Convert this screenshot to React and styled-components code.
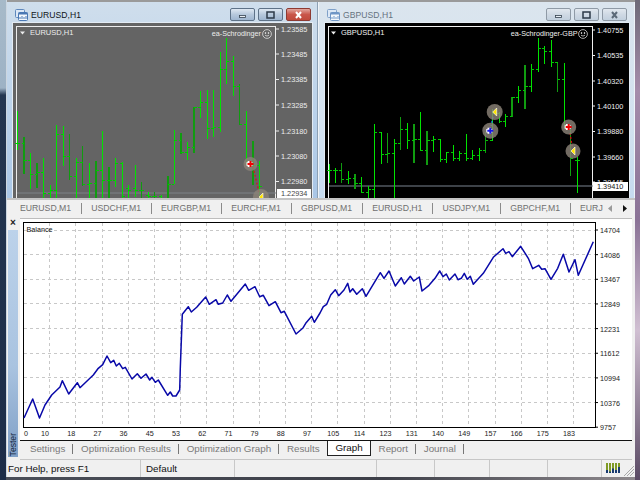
import React from 'react';
import styled, { createGlobalStyle } from 'styled-components';

const GlobalStyle = createGlobalStyle`
  html, body { margin: 0; padding: 0; background: #3a3f4a; }
  body { font-family: "Liberation Sans", Arial, sans-serif; }
`;

const Desktop = styled.div`
  width: 640px;
  height: 480px;
  box-sizing: border-box;
  padding: 0 5px 3px 7px;
  overflow: hidden;
  background:
    linear-gradient(180deg, #a7bac9 0, #9db2c5 88px, #243650 95px, #1d2d48 100%) left / 6px 100% no-repeat,
    linear-gradient(180deg, #6e6a78 0, #a58cab 90px, #8a7296 220px, #d0bfd2 330px, #5a4a64 480px) right / 5px 100% no-repeat,
    linear-gradient(90deg, #4a4e58, #3d3f48 60%, #8f8a8e) bottom / 100% 3px no-repeat,
    #ccd6e0;
`;

const AppWindow = styled.div`
  height: 100%;
  display: flex;
  flex-direction: column;
  background: #f0f0f0;
`;

const MdiArea = styled.div`
  height: 198px;
  flex: none;
  box-sizing: border-box;
  padding-top: 2px;
  display: grid;
  grid-template-columns: 310px 315px;
  column-gap: 2px;
  background: linear-gradient(180deg, #9a9a9a 0, #9a9a9a 2px, #eef3f8 2px);
`;

const ChartWindow = styled.div`
  display: flex;
  flex-direction: column;
  padding: 0 5px 0 6px;
  box-shadow: 1px 0 0 ${p => p.$active ? '#8ca0b4' : 'transparent'};
  background: ${p => p.$active
    ? 'linear-gradient(180deg, #cfdeec, #b9d1ea 60%, #a9c6e6)'
    : 'linear-gradient(180deg, #dbe5ee, #d3e2f0 60%, #c6dbf0)'};
`;

const TitleBar = styled.div`
  height: 21px;
  flex: none;
  box-sizing: border-box;
  padding: 4px 0 0 2px;
  display: flex;
  align-items: center;
  gap: 3px;
`;

const Title = styled.span`
  font-size: 8.6px;
  color: ${p => p.$active ? '#101418' : '#66737f'};
  letter-spacing: 0.05px;
  margin-right: auto;
`;

const WindowButtons = styled.div`
  display: flex;
  gap: 3px;
  padding-right: ${p => p.$right}px;
`;

const CaptionButton = styled.div`
  width: 25px;
  height: 13px;
  border-radius: 2px;
  border: 1px solid ${p => p.$close ? '#8e3a32' : p.$active ? '#5e7288' : '#8f9aa6'};
  box-sizing: border-box;
  display: flex;
  align-items: center;
  justify-content: center;
  background: ${p => p.$close
    ? 'linear-gradient(180deg, #e2a79f, #c9564a 50%, #c04a3c)'
    : p.$active
      ? 'linear-gradient(180deg, #dfe8f2, #b6c8dc 50%, #9fb6d0)'
      : 'linear-gradient(180deg, #e2e8ef, #cfd9e4 50%, #c2d0de)'};
`;

const ChartPane = styled.div`
  flex: 1;
  min-height: 0;
  background: ${p => p.$bg};
  box-shadow: 0 0 0 1px #e3ebf3;
  overflow: hidden;
  svg { display: block; }
  text { font-family: "Liberation Sans", Arial, sans-serif; }
`;

const TabStrip = styled.div`
  height: 18px;
  flex: none;
  box-sizing: border-box;
  display: flex;
  align-items: center;
  padding-left: 13px;
  border-top: 2px solid #c4c4c4;
  background: #f0f0f0;
  overflow: hidden;
`;

const TabList = styled.div`
  flex: 1;
  display: flex;
  overflow: hidden;
  white-space: nowrap;
`;

const ChartTab = styled.span`
  font-size: 8.7px;
  line-height: 11px;
  color: #6f6f6f;
  padding-right: 9.7px;
  margin-right: 9.4px;
  border-right: 1px solid ${p => p.$last ? 'transparent' : '#8a8a8a'};
`;

const ScrollArrows = styled.div`
  width: 30px;
  flex: none;
  box-sizing: border-box;
  display: flex;
  align-items: center;
  gap: 11px;
  padding-left: 3px;
  svg { display: block; }
`;

const TesterPanel = styled.div`
  height: 244px;
  flex: none;
  display: flex;
`;

const Rail = styled.div`
  width: 13px;
  flex: none;
  box-sizing: border-box;
  padding: 3px 2px 3px 1px;
  display: flex;
  flex-direction: column;
`;

const RailClose = styled.div`
  height: 11px;
  font-size: 10px;
  font-weight: bold;
  line-height: 8px;
  text-align: center;
  color: #222;
`;

const RailGrip = styled.div`
  flex: 1;
  display: flex;
  align-items: flex-end;
  justify-content: center;
  background: linear-gradient(180deg, #bcd2ea 0, #a9c3e0 60%, #7f9fc6 100%);
`;

const RailLabel = styled.span`
  writing-mode: vertical-rl;
  transform: rotate(180deg);
  font-size: 8.6px;
  color: #14263e;
  padding-top: 1px;
`;

const TesterBody = styled.div`
  flex: 1;
  min-width: 0;
  display: flex;
  flex-direction: column;
  padding-right: 3px;
`;

const GraphArea = styled.div`
  height: 222px;
  margin-top: 2px;
  flex: none;
  box-sizing: border-box;
  border-top: 1px solid #bdbdbd;
  background: #fff;
  overflow: hidden;
  svg { display: block; }
  text { font-family: "Liberation Sans", Arial, sans-serif; }
`;

const TesterTabs = styled.div`
  height: 20px;
  flex: none;
  box-sizing: border-box;
  display: flex;
  align-items: flex-start;
  border-top: 1px solid #111;
  border-bottom: 1px solid #c6c6c6;
  padding-left: 2px;
`;

const TesterTab = styled.div`
  height: 15px;
  box-sizing: border-box;
  font-size: 9.8px;
  line-height: 15px;
  color: ${p => p.$active ? '#111' : '#7a7a7a'};
  background: ${p => p.$active ? '#fff' : 'transparent'};
  padding: 0 ${p => p.$active ? 7 : 7.9}px;
  position: relative;
  ${p => p.$active && 'border: 1px solid #222; border-top: 0; line-height: 14px;'}
  ${p => p.$sep && `&::after {
    content: "";
    position: absolute;
    right: 0;
    top: 3px;
    height: 10px;
    border-right: 1px solid #777;
  }`}
`;

const StatusBar = styled.div`
  flex: 1;
  display: grid;
  grid-template-columns: 134px 94px 142px 58px 55px 58px 54px 1fr;
  background: #f0f0f0;
`;

const StatusCell = styled.div`
  box-sizing: border-box;
  font-size: 9.8px;
  line-height: 17px;
  color: #111;
  white-space: nowrap;
  padding-left: ${p => p.$pad || 0}px;
  border-right: 1px solid #c8c8c8;
`;

const StatusEnd = styled.div`
  display: flex;
  align-items: center;
  padding-left: 4px;
  svg { display: block; }
`;

const thin = '#00e400';
const wide = '#109c10';

// [x, high, low, open, close, thick] all in 3x zoom coords of the window
const eurBars = [
  [52, 333, 450, 430, 430], [72, 412, 522, 430, 480, 1], [91, 459, 568, 480, 522], [111, 490, 563, 522, 518, 1],
  [130, 474, 600, 518, 580], [150, 556, 600, 580, 572], [170, 376, 600, 572, 403], [190, 378, 497, 403, 470],
  [209, 402, 540, 470, 530, 1], [229, 475, 600, 530, 487], [248, 438, 558, 487, 553, 1], [268, 489, 600, 553, 550],
  [288, 484, 600, 550, 510, 1], [307, 393, 600, 510, 540], [327, 502, 600, 540, 540, 1], [346, 475, 560, 540, 490],
  [366, 486, 600, 490, 590], [385, 556, 600, 565, 572], [405, 495, 590, 565, 572], [425, 546, 600, 572, 570, 1],
  [444, 575, 600, 585, 590], [464, 576, 600, 590, 590, 1], [484, 585, 600, 590, 595], [504, 527, 600, 595, 552, 1],
  [523, 390, 552, 552, 420], [543, 400, 462, 420, 458, 1], [563, 427, 480, 458, 442], [582, 322, 458, 442, 322, 1],
  [602, 272, 354, 322, 306], [621, 270, 418, 306, 385], [641, 270, 412, 385, 381], [661, 156, 396, 381, 208],
  [680, 115, 253, 208, 185], [700, 168, 288, 185, 260], [719, 252, 374, 260, 373, 1], [739, 332, 495, 373, 490],
  [759, 424, 555, 490, 495, 1], [778, 482, 600, 495, 560],
];

const gbpBars = [
  [27, 492, 548, 510, 510], [46, 505, 548, 510, 510], [65, 490, 548, 510, 537, 1], [85, 512, 552, 537, 535],
  [105, 522, 566, 535, 550, 1], [124, 530, 580, 550, 577], [144, 558, 600, 577, 567], [163, 373, 600, 567, 398],
  [184, 397, 493, 398, 462], [203, 400, 488, 462, 460, 1], [223, 418, 600, 460, 430], [242, 352, 450, 430, 387, 1],
  [262, 370, 446, 387, 420], [282, 373, 490, 420, 418, 1], [301, 337, 452, 418, 450], [321, 392, 494, 450, 420, 1],
  [340, 408, 455, 420, 418], [360, 417, 486, 418, 478], [380, 455, 490, 478, 458], [400, 436, 484, 458, 476],
  [419, 452, 484, 476, 460], [438, 402, 482, 460, 475], [458, 450, 480, 475, 465], [478, 445, 482, 465, 450],
  [497, 395, 460, 450, 420, 1], [517, 328, 424, 420, 340], [537, 335, 370, 340, 365], [556, 343, 380, 365, 350],
  [576, 291, 352, 350, 293, 1], [595, 258, 308, 293, 270], [615, 195, 327, 270, 258, 1], [634, 193, 275, 258, 208],
  [655, 113, 215, 208, 145], [674, 138, 192, 145, 155], [693, 120, 200, 155, 188], [713, 188, 275, 188, 238, 1],
  [733, 188, 385, 238, 380], [752, 382, 527, 380, 475, 1], [772, 472, 580, 482, 480],
];

const eurPrices = [['1.23585', 29], ['1.23485', 54], ['1.23385', 79.5], ['1.23285', 105], ['1.23180', 131], ['1.23080', 156], ['1.22980', 181.5]];
const gbpPrices = [['1.40755', 30], ['1.40535', 55.5], ['1.40320', 81], ['1.40100', 106], ['1.39880', 131.5], ['1.39660', 157], ['1.39445', 182]];

const balance = [
  [24, 418], [32.7, 399], [39.5, 418], [45, 405], [51.7, 395], [60, 387], [62.3, 380.7], [68.7, 394], [77.3, 382.7], [80, 387.7],
  [93.3, 375], [98.3, 368.3], [102.7, 364.7], [107, 356], [110.7, 362.7], [113.7, 360.3], [116.3, 366], [119.3, 363.3],
  [122.7, 368.7], [125.3, 367.3], [132, 379], [137.3, 373.7], [141, 378.3], [146, 374], [149.7, 380], [152, 377.3],
  [155.3, 382.3], [158.3, 380], [167.7, 395.3], [170.3, 392], [172.7, 396], [176, 396], [179.7, 390], [180.3, 368],
  [182.3, 314.3], [188.3, 306.7], [191.3, 312], [196.7, 307.3], [205.7, 297], [209.3, 304.3], [216, 299.7], [218.3, 304.3],
  [222.7, 303], [227.3, 295], [231, 301.3], [245.3, 284], [248.7, 290.3], [255, 286.7], [259.7, 296.7], [263.3, 295.3],
  [269, 305.7], [275.3, 301.7], [281, 312.7], [284.3, 311.3], [296, 334], [302.7, 328.3], [305.7, 323.3], [311.7, 316.3],
  [314.3, 322.3], [320, 313], [323.3, 306.7], [326.7, 304.3], [330.7, 295], [335.3, 289.7], [338.7, 295.7], [344, 290],
  [347.7, 283.3], [350, 292], [352.7, 288.7], [356.7, 294.3], [362.3, 288.7], [366, 296.3], [380.3, 272.7], [384, 278.3],
  [389, 271], [395.3, 286], [401.3, 277.7], [404.3, 284], [410.3, 276.3], [413.7, 281], [419.3, 277], [422, 291],
  [429, 285.3], [435, 278.3], [439.7, 271], [443, 276.7], [446.3, 274], [449.3, 280], [455, 274], [458, 279.7],
  [461.3, 278.3], [464.3, 273.3], [467.3, 279.3], [470.3, 276.3], [473.3, 284.3], [483.3, 273.3], [493.3, 257.3], [503, 248.7],
  [505.7, 253.3], [509, 251.7], [512.3, 256.7], [520.7, 246.3], [528.3, 258.3], [532.7, 268.7], [538.7, 265.3], [541.7, 269.3],
  [545, 268.7], [551, 279.3], [557.7, 268.3], [563.3, 254.3], [569, 272], [575, 259.7], [578.3, 275.3], [593.3, 241.7],
];

const yLabels = ['14704', '14086', '13467', '12849', '12231', '11612', '10994', '10376', '9757'];
const xLabels = ['0', '10', '18', '27', '36', '45', '53', '62', '71', '79', '88', '97', '105', '114', '123', '131', '140', '149', '157', '166', '175', '183'];

const WindowIcon = ({ dim }) => (
  <svg width="13" height="12" viewBox="0 0 13 12" style={{ flex: 'none' }}>
    <rect x="0.5" y="0.5" width="9" height="8" rx="1" fill="#dce8f6" stroke={dim ? '#7fa0c8' : '#5f88bc'} />
    <rect x="3.5" y="3.5" width="9" height="8" rx="1" fill="#f4f8fc" stroke={dim ? '#6f96c6' : '#4a78b4'} />
    <rect x="3.5" y="3.5" width="9" height="2" fill={dim ? '#6f96c6' : '#4a78b4'} />
    <path d="M5 10V8M7 10V7M9 10V8M11 10V7" stroke={dim ? '#6f96c6' : '#4a78b4'} />
  </svg>
);

const Caption = ({ kind, active }) => (
  <CaptionButton $close={kind === 'close' && active} $active={active}>
    <svg width="11" height="8" viewBox="0 0 11 8">
      {kind === 'min' && <rect x="2.5" y="4.5" width="6" height="2" fill="#e8eef4" stroke="#33414f" strokeWidth="0.8" />}
      {kind === 'max' && <rect x="2" y="1" width="7" height="6" fill="none" stroke="#2c3a48" strokeWidth="1.5" />}
      {kind === 'close' && <path d="M3 1l5 6M8 1L3 7" stroke={active ? '#fff' : '#5c6a78'} strokeWidth="2" />}
    </svg>
  </CaptionButton>
);

const Marker = ({ x, y, r = 7.5, kind }) => {
  const arrow = `M${x - 3} ${y}h6M${x} ${y - 3}v6`;
  const color = kind === 'red' ? '#f00000' : '#1414e8';
  return (
    <g>
      <circle cx={x} cy={y} r={r} fill="#8b8378" fillOpacity="0.82" />
      {kind === 'sell' && <path d={`M${x + 2} ${y - 4}v8l-4 -4z`} fill="#ffe600" stroke="#fff" strokeWidth="0.6" />}
      {kind !== 'sell' && <path d={arrow} stroke="#fff" strokeWidth="3.6" transform="translate(-1 0)" />}
      {kind !== 'sell' && <path d={arrow} stroke={color} strokeWidth="2" />}
    </g>
  );
};

const ChartBars = ({ bars, base }) => (
  <g shapeRendering="crispEdges">
    {bars.map(([x, hi, lo, open, close, thick]) => {
      const px = base + x / 3;
      const color = thick ? wide : thin;
      return (
        <g key={x} stroke={color}>
          <line x1={px} x2={px} y1={hi / 3} y2={lo / 3} strokeWidth={thick ? 1.6 : 1} />
          <line x1={px - 2.5} x2={px} y1={open / 3} y2={open / 3} stroke="#00c800" />
          <line x1={px} x2={px + 2.5} y1={close / 3} y2={close / 3} stroke="#00c800" />
        </g>
      );
    })}
  </g>
);

const PriceAxis = ({ prices, frameX, labelX, color }) => (
  <g>
    {prices.map(([label, y]) => (
      <g key={label}>
        <line x1={frameX} x2={frameX + 3} y1={y} y2={y} stroke={color} />
        <text x={labelX} y={y + 2.6} fontSize="7.3" fill={color}>{label}</text>
      </g>
    ))}
  </g>
);

const Smiley = ({ x, y, color }) => (
  <g fill="none" stroke={color} strokeWidth="0.7">
    <circle cx={x} cy={y} r="4.4" />
    <circle cx={x - 1.5} cy={y - 1} r="0.5" fill={color} />
    <circle cx={x + 1.5} cy={y - 1} r="0.5" fill={color} />
    <path d={`M${x - 2} ${y + 1.2}q2 1.8 4 0`} />
  </g>
);

const ChartLabels = ({ symbol, expert, triX, symX, expertEnd, smileX, color }) => (
  <g>
    <path d={`M${triX} 31.5h5l-2.5 3z`} fill={color} />
    <text x={symX} y={35.3} fontSize="7.5" fill={color}>{symbol}</text>
    <text x={expertEnd} y={36.4} fontSize="7.2" fill={color} textAnchor="end">{expert}</text>
    <Smiley x={smileX} y={34} color={color} />
  </g>
);

const App = () => {
  const gridX = Array.from({ length: 22 }, (_, i) => 23.5 + 26.2 * i);
  const gridY = Array.from({ length: 8 }, (_, i) => 230 + 24.65 * i);
  const chartTabs = ['EURUSD,M1', 'USDCHF,M1', 'EURGBP,M1', 'EURCHF,M1', 'GBPUSD,M1', 'EURUSD,H1', 'USDJPY,M1', 'GBPCHF,M1'];
  const barTops = [2, 1, 3, 2, 4];
  return (
    <Desktop>
      <GlobalStyle />
      <AppWindow>
        <MdiArea>
          <ChartWindow $active>
            <TitleBar>
              <WindowIcon />
              <Title $active>EURUSD,H1</Title>
              <WindowButtons $right={1}>
                <Caption kind="min" active />
                <Caption kind="max" active />
                <Caption kind="close" active />
              </WindowButtons>
            </TitleBar>
            <ChartPane $bg="#646464">
              <svg width="299" height="175" viewBox="13 23 299 175">
                <rect x="16.5" y="26.5" width="259" height="180" fill="none" stroke="#ececec" />
                <line x1="17" x2="276" y1="193" y2="193" stroke="#7c8186" />
                <ChartBars bars={eurBars} base={0} />
                <path d="M253 167L259 192" stroke="#e01010" strokeWidth="1.2" strokeDasharray="2 2" />
                <Marker x={250.5} y={164} r={7} kind="red" />
                <Marker x={261} y={197} r={8} kind="sell" />
                <PriceAxis prices={eurPrices} frameX={276} labelX={281} color="#ececec" />
                <rect x="277" y="189" width="34" height="9" fill="#fff" />
                <text x="281" y="196" fontSize="7.3" fill="#444">1.22934</text>
                <ChartLabels symbol="EURUSD,H1" expert="ea-Schrodinger" triX={20} symX={30} expertEnd={261} smileX={267} color="#ececec" />
              </svg>
            </ChartPane>
          </ChartWindow>
          <ChartWindow>
            <TitleBar>
              <WindowIcon dim />
              <Title>GBPUSD,H1</Title>
              <WindowButtons $right={2}>
                <Caption kind="min" />
                <Caption kind="max" />
                <Caption kind="close" />
              </WindowButtons>
            </TitleBar>
            <ChartPane $bg="#000">
              <svg width="304" height="175" viewBox="325 23 304 175">
                <rect x="328.5" y="26.5" width="264" height="180" fill="none" stroke="#f0f0f0" />
                <line x1="329" x2="593" y1="186" y2="186" stroke="#7a8490" />
                <ChartBars bars={gbpBars} base={320} />
                <path d="M493 117L491 126" stroke="#1e8cff" strokeWidth="1.2" strokeDasharray="2 2" />
                <path d="M570 133L572 146" stroke="#d01010" strokeWidth="1.4" strokeDasharray="2 2" />
                <Marker x={494.7} y={112} r={8} kind="sell" />
                <Marker x={490.3} y={130.7} r={8} kind="blue" />
                <Marker x={568.7} y={127} r={7.5} kind="red" />
                <Marker x={573} y={151} r={7.5} kind="sell" />
                <PriceAxis prices={gbpPrices} frameX={592} labelX={597} color="#f0f0f0" />
                <rect x="593" y="182" width="35" height="9" fill="#fff" />
                <text x="597" y="189" fontSize="7.3" fill="#111">1.39410</text>
                <ChartLabels symbol="GBPUSD,H1" expert="ea-Schrodinger-GBP" triX={331} symX={341} expertEnd={577.5} smileX={583} color="#f0f0f0" />
              </svg>
            </ChartPane>
          </ChartWindow>
        </MdiArea>

        <TabStrip>
          <TabList>
            {chartTabs.map(t => <ChartTab key={t}>{t}</ChartTab>)}
            <ChartTab $last>EURJ</ChartTab>
          </TabList>
          <ScrollArrows>
            <svg width="4" height="7" viewBox="0 0 4 7"><path d="M4 0v7L0 3.5z" fill="#9a9a9a" /></svg>
            <svg width="4" height="7" viewBox="0 0 4 7"><path d="M0 0v7l4-3.5z" fill="#111" /></svg>
          </ScrollArrows>
        </TabStrip>

        <TesterPanel>
          <Rail>
            <RailClose>×</RailClose>
            <RailGrip><RailLabel>Tester</RailLabel></RailGrip>
          </Rail>
          <TesterBody>
            <GraphArea>
              <svg width="612" height="221" viewBox="20 219 612 221">
                <g stroke="#c8c8c8" strokeDasharray="3 3" shapeRendering="crispEdges">
                  {gridX.slice(1).map(x => <line key={x} x1={x} x2={x} y1="223" y2="427" />)}
                  {gridY.map(y => <line key={y} x1="24" x2="595" y1={y} y2={y} />)}
                </g>
                <rect x="23.5" y="222.5" width="572" height="205" fill="none" stroke="#000" strokeWidth="1" />
                <polyline points={balance.map(p => p.join(',')).join(' ')} fill="none" stroke="#0808a8" strokeWidth="1.5" strokeLinejoin="round" />
                <text x="26.5" y="231.5" fontSize="7.2" fill="#111">Balance</text>
                {yLabels.map((l, i) => (
                  <g key={l}>
                    <line x1="595" x2="598" y1={230 + 24.65 * i} y2={230 + 24.65 * i} stroke="#000" />
                    <text x="600" y={233 + 24.65 * i} fontSize="7.2" fill="#222">{l}</text>
                  </g>
                ))}
                {xLabels.map((l, i) => (
                  <text key={i} x={i === 0 ? 26 : 45 + 26.2 * (i - 1)} y="435.5" fontSize="7.2" fill="#222" textAnchor="middle">{l}</text>
                ))}
              </svg>
            </GraphArea>
            <TesterTabs>
              <TesterTab $sep>Settings</TesterTab>
              <TesterTab $sep>Optimization Results</TesterTab>
              <TesterTab $sep>Optimization Graph</TesterTab>
              <TesterTab>Results</TesterTab>
              <TesterTab $active>Graph</TesterTab>
              <TesterTab $sep>Report</TesterTab>
              <TesterTab $sep>Journal</TesterTab>
            </TesterTabs>
          </TesterBody>
        </TesterPanel>

        <StatusBar>
          <StatusCell $pad={1}>For Help, press F1</StatusCell>
          <StatusCell $pad={5}>Default</StatusCell>
          <StatusCell />
          <StatusCell />
          <StatusCell />
          <StatusCell />
          <StatusCell />
          <StatusEnd>
            <svg width="29" height="15" viewBox="0 0 29 15">
              {barTops.map((top, i) => (
                <g key={i}>
                  <rect x={i * 3} y="2" width="2" height="10" fill="#7f9a24" />
                  <rect x={i * 3} y={2 + 10 - top * 1.5} width="2" height={top * 1.5} fill="#173a70" />
                </g>
              ))}
              <path d="M28 5L18 15M28 8L21 15M28 11L24 15" stroke="#a8a8a8" />
            </svg>
          </StatusEnd>
        </StatusBar>
      </AppWindow>
    </Desktop>
  );
};

export default App;
